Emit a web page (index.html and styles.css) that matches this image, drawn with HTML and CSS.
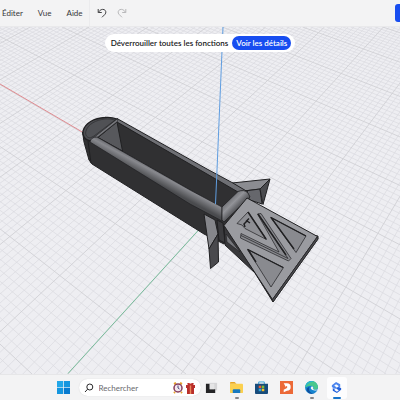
FILE: index.html
```html
<!DOCTYPE html>
<html lang="fr">
<head>
    <meta charset="UTF-8">
    <meta name="viewport" content="width=device-width, initial-scale=1.0">
    <title>Modeleur 3D</title>
    <link rel="stylesheet" href="styles.css">
</head>
<body>
    <header class="menubar">
        <nav class="menus">
            <button class="menu">Éditer</button>
            <button class="menu">Vue</button>
            <button class="menu">Aide</button>
        </nav>
        <div class="history">
            <button class="tool" aria-label="Annuler">
                <svg viewBox="0 0 10 10"><path d="M1.2 1v3.5h3.6M1.4 4.3C3 1.7 5.200.9 7.100 1.600c2 .8 2.300 3.300.9 4.700L5 9.300"/></svg>
            </button>
            <button class="tool" aria-label="Rétablir" disabled>
                <svg viewBox="0 0 10 10"><path d="M8.800 1v3.500H5.200M8.600 4.300C7 1.700 4.800.9 2.900 1.600c-2 .8-2.300 3.300-.9 4.700L5 9.300"/></svg>
            </button>
        </div>
        <button class="share" aria-label="Partager"></button>
    </header>

    <main class="viewport">
        <svg class="scene" viewBox="0 27 400 347" preserveAspectRatio="xMidYMid slice" role="img" aria-label="Modèle 3D">
            <defs>
                <linearGradient id="tube" gradientUnits="userSpaceOnUse" x1="154" y1="165" x2="147" y2="178">
                    <stop offset="0" stop-color="#55565a"/>
                    <stop offset=".4" stop-color="#88898e"/>
                    <stop offset="1" stop-color="#4a4b4e"/>
                </linearGradient>
                <linearGradient id="endTube" gradientUnits="userSpaceOnUse" x1="228" y1="198" x2="238" y2="208">
                    <stop offset="0" stop-color="#67686c"/>
                    <stop offset=".5" stop-color="#929398"/>
                    <stop offset="1" stop-color="#55565a"/>
                </linearGradient>
            </defs>
            <path id="minor" class="grid-minor"/>
            <path id="major" class="grid-major"/>
            <path class="axis-x" d="M0 84L84 133"/>
            <path class="axis-y" d="M68 373.500L204 224"/>

            <g class="model">
                <!-- upper fin -->
                <path fill="#8b8c91" d="M232 183L270 179L260 189L244 191Z"/>
                <path fill="#66676c" d="M244 191L260 189L262 204L250 200Z"/>
                <path fill="#4a4b4f" d="M270 179L263 204.500L260 189Z"/>
                <!-- body -->
                <path fill="#303032" d="M82.500 132L84 142L89 160L92 164L204 234L224 244L248 200L222 218L90 140Z"/>
                <path d="M88 141L91 163"/>
                <path fill="#4d4e52" stroke-width="1.300" d="M90 141C85 140 82 136 83 131C85 123 94 118 105 117.500Q112 117 117 119L97 137Z"/>
                <path fill="#505155" stroke-width=".5" d="M90 138C86 137 85 134 86 131C88 124 96 120 105 119Q111 118.500 115 120L94 136Z"/>
                <path fill="#6e6f74" d="M117 118.500L207 169L232 182.500L248 192L238 194L116 122Z"/>
                <path fill="#303032" d="M117 122L207 174L238 192L222 208L97 137Z"/>
                <path fill="#57585c" d="M117 122L122.500 151L98 137.500Z"/>
                <path fill="#77787d" stroke-width=".6" d="M117 119L118 121L98 137L92 139Z"/>
                <path fill="url(#tube)" stroke-width=".7" d="M90 142Q91 137 97 137L190 190L222 207L222 221L190 204Z"/>
                <path fill="url(#endTube)" stroke-width=".8" d="M238 191.500Q244 189 248 193L250 197L224 222L222 220L222 207Z"/>
                <path class="axis-z" d="M223 27L217 170L215.500 204"/>
                <!-- lower left fin -->
                <path fill="#85868b" d="M204 214L209 249L218 234L215 220Z"/>
                <path fill="#49494d" d="M209 249L218 234L218.500 262L210.500 268.500Z"/>
                <path fill="#3b3b3e" d="M217 220L223 223L225 243L219 240Z"/>
                <!-- end plate -->
                <path fill="#38383b" d="M224 225L225 245L255 273L273 302L318 239L318 236Z"/>
                <path fill="#75767b" stroke-width=".6" d="M226 234L227 242L240 252Z"/>
                <path fill="#9a9ba0" d="M247 198L317.500 236.500L272.500 299.500L224 225.500Z"/>
                <path fill="#4c4c50" stroke-width=".6" d="M317.500 236.500L318 239L273 302L272.500 299.500Z"/>
                <g stroke-width=".7">
                    <path fill="#8e8f94" d="M237 223.500L248 212L266.500 239.500L245 228.500L242 225Z"/>
                    <path stroke-width="1.500" fill="none" d="M248 212L266 239M245 227L244 224L247 221L250 223M246 221.500L249 218.500"/>
                    <path fill="#87888d" d="M257.500 214L261 213.500L291 258.500L288.500 261L240.500 238L241 233.500L279 252Z"/>
                    <path fill="none" d="M241 235.500L288 258.500L259 215"/>
                    <path stroke-width="1.500" d="M258 214L286 255"/>
                    <path fill="#898a8f" d="M271 217.500L306 236L296 252.500Z"/>
                    <path stroke-width="1.400" fill="none" d="M306 236L271 217.500L294 249"/>
                    <path fill="#898a8f" d="M247.500 249.500L283.500 267.500L271 287Z"/>
                    <path stroke-width="1.400" fill="none" d="M283 267.500L248 249.500L256 262"/>
                </g>
            </g>
        </svg>

        <div class="unlock">
            <span>Déverrouiller toutes les fonctions</span>
            <button class="details">Voir les détails</button>
        </div>
    </main>

    <footer class="taskbar">
        <button class="app" aria-label="Démarrer">
            <svg viewBox="0 0 14 14"><path fill="#22a7e8" d="M0 0h6.600v6.600H0z"/><path fill="#1596df" d="M7.400 0H14v6.600H7.400zM0 7.400h6.600V14H0z"/><path fill="#087bd0" d="M7.400 7.400H14V14H7.400z"/></svg>
        </button>
        <label class="search">
            <svg class="lens" viewBox="0 0 10 10"><circle cx="5.800" cy="4" r="3"/><path d="M3.600 6.200L1 9"/></svg>
            <input type="text" placeholder="Rechercher" aria-label="Rechercher">
            <svg class="promo" viewBox="0 0 24 12">
                <path stroke="#e5a22c" stroke-width="2" d="M2 2l2-1M10 2L8 1M3 10l-1 1M9 10l1 1"/>
                <circle cx="6" cy="6" r="4" fill="#f3e8ef" stroke="#873d5c" stroke-width="1.500"/>
                <path stroke="#47437c" fill="none" d="M6 3.500V6l1.500 1"/>
                <path fill="#b92f2a" d="M14 3h9v3h-9zM15 6h7v6h-7z"/>
                <path fill="#e98b5d" d="M17.800 3h1.400v9h-1.400z"/>
                <path stroke="#bd302b" stroke-width="1.200" fill="none" d="M18.500 3C15 3 15 0 18.500 2.500C22 0 22 3 18.500 3"/>
            </svg>
        </label>
        <button class="app" aria-label="Vue des tâches">
            <svg viewBox="0 0 14 14"><path fill="#d5d5d7" d="M5 2h8v8H5z"/><path fill="#242426" d="M1 3h4v6h6v4H1z"/><path fill="#f5f5f6" d="M5 3h5v6H5z" opacity=".5"/></svg>
        </button>
        <button class="app open" aria-label="Explorateur de fichiers">
            <svg viewBox="0 0 14 14"><path fill="#e6a622" d="M0 2q0-1 1-1h4l2 2H0z"/><path fill="#fbd04f" d="M0 3h13q1 0 1 1v8q0 1-1 1H1q-1 0-1-1z"/><path fill="#1879bf" d="M3 13v-3q0-1 1-1h6q1 0 1 1v3z"/></svg>
        </button>
        <button class="app" aria-label="Microsoft Store">
            <svg viewBox="0 0 14 14"><path fill="none" stroke="#35a3dc" d="M4 4V1h6v3"/><path fill="#174c7c" d="M0 3h14v10q0 1-1 1H1q-1 0-1-1z"/><path fill="#f05b32" d="M4 5h2.700v2.700H4z"/><path fill="#80bb35" d="M7.300 5H10v2.700H7.300z"/><path fill="#2ca8e0" d="M4 8.300h2.700V11H4z"/><path fill="#fbbd21" d="M7.300 8.300H10V11H7.300z"/></svg>
        </button>
        <button class="app" aria-label="Éditeur PDF">
            <svg viewBox="0 0 14 14"><path fill="#ec6937" d="M0 0h14v14H0z"/><path fill="#fff" d="M4 2.500h3.500a4 4 0 0 1 0 8L4 12V9.500l3-1.700c1.500-1 1-2.300-.5-2.300V7z"/></svg>
        </button>
        <button class="app open" aria-label="Microsoft Edge">
            <svg viewBox="0 0 14 14"><circle cx="7" cy="7" r="7" fill="#1684cf"/><path fill="#48c78d" d="M1 4C3-1 12-2 14 6c.3 3-3 4-5 3 1-2 0-4-2.500-4C4 5 2 6 0 7z"/><path fill="#26b6d6" d="M1 4C3 0 7-1 10 1 5 0 2 4 0 7z"/><path fill="#104f9d" d="M5 6c-2 4 1 8 5 7-5 2-9-1-8-5z"/><path fill="#f1f4f5" d="M7 6c-2 2 0 5 6 4 1 0 1-1 .3-.8C10 10 8 9 9 7.500 9 6 8 5.500 7 6z"/></svg>
        </button>
        <button class="app open active" aria-label="Modeleur 3D">
            <svg viewBox="0 0 14 14"><path fill="#4b85ee" d="M2 4.500L6.500 1l4.500 2.500v3L9 8V5L6.500 3.500 4.500 5l3 2-2 1.500L2 6.500z"/><path fill="#1f5edb" d="M12 9.500L7.500 13 3 10.500v-3L5 9v1l2.500 1.500 2-1.500-3-2 2-1.500L12 7.500z"/></svg>
        </button>
    </footer>

    <script>
        // Ground grid: lines run from each vanishing point to the bottom edge.
        const horizonY = -350;
        const sceneTop = 27;
        const sceneBottom = 374;

        function gridLines(vanishX, start, step, from, to, keep) {
            const t = (sceneTop - horizonY) / (sceneBottom - horizonY);
            let d = '';
            for (let i = from; i <= to; i++) {
                if (!keep(i)) continue;
                const x = start + i * step;
                const topX = vanishX + (x - vanishX) * t;
                d += `M${topX.toFixed(1)} ${sceneTop}L${x.toFixed(1)} ${sceneBottom}`;
            }
            return d;
        }

        function drawGrid(id, keep) {
            const d = gridLines(-742, 494, 15.4, -34, 64, keep)
                + gridLines(726, 68, 11.3, -70, 32, keep);
            document.getElementById(id).setAttribute('d', d);
        }

        drawGrid('minor', i => i % 10 !== 0);
        drawGrid('major', i => i % 10 === 0);
    </script>
</body>
</html>
```

FILE: styles.css
```css
* {
    box-sizing: border-box;
}
body {
    margin: 0;
    height: 100vh;
    display: flex;
    flex-direction: column;
    overflow: hidden;
    background-color: #f3f3f4;
    font-family: Lato, "Noto Sans", sans-serif;
    font-size: 8px;
    color: #38383a;
}
button,
input {
    margin: 0;
    padding: 0;
    border: none;
    background: none;
    font: inherit;
    color: inherit;
}
button {
    cursor: pointer;
}
.menubar {
    flex: none;
    display: flex;
    align-items: center;
    height: 27px;
    border-bottom: 1px solid #e9e9eb;
}
.menus {
    display: flex;
    gap: 15px;
    padding: 0 6px 0 2px;
}
.history {
    display: flex;
    align-items: center;
    gap: 10px;
    height: 100%;
    padding-left: 7px;
    border-left: 1px solid #ebebed;
}
.tool {
    width: 10px;
    height: 10px;
}
.tool svg {
    display: block;
    fill: none;
    stroke: #444446;
    stroke-width: 1;
}
.tool:disabled svg {
    stroke: #b8b8ba;
}
.share {
    width: 5px;
    height: 18px;
    margin-left: auto;
    border-radius: 3px 0 0 3px;
    background-color: #174df0;
}
.viewport {
    position: relative;
    flex: 1;
    min-height: 0;
    display: flex;
    flex-direction: column;
    align-items: center;
    padding-top: 7px;
    background-color: #eeeef2;
}
.scene {
    position: absolute;
    inset: 0;
    width: 100%;
    height: 100%;
    fill: none;
}
.grid-minor {
    stroke: #dadadf;
    stroke-width: .7;
}
.grid-major {
    stroke: #d0d0d5;
    stroke-width: .9;
}
.axis-x {
    stroke: #e08b90;
}
.axis-y {
    stroke: #79bd9c;
}
.model {
    stroke: #202022;
    stroke-linejoin: round;
}
.model .axis-z {
    stroke: #5f9de0;
    fill: none;
}
.unlock {
    position: relative;
    display: flex;
    align-items: center;
    gap: 4px;
    height: 18px;
    padding: 0 4px 0 6px;
    border-radius: 9px;
    background-color: #fff;
    font-weight: 600;
    color: #19191b;
}
.details {
    height: 14px;
    padding: 0 4px;
    border-radius: 7px;
    background-color: #174df0;
    color: #fff;
}
.taskbar {
    flex: none;
    display: flex;
    justify-content: center;
    align-items: center;
    gap: 5px;
    height: 26px;
    border-top: 1px solid #e6e6e8;
}
.app {
    position: relative;
    display: flex;
    justify-content: center;
    align-items: center;
    width: 20px;
    height: 22px;
    border-radius: 3px;
}
.app svg {
    width: 13px;
    height: 13px;
}
.open::after {
    content: "";
    position: absolute;
    bottom: 0;
    width: 4px;
    height: 2px;
    border-radius: 1px;
    background-color: #858588;
}
.active {
    background-color: #fdfdfe;
}
.active::after {
    width: 8px;
    background-color: #1673ca;
}
.search {
    display: flex;
    align-items: center;
    width: 122px;
    height: 17px;
    margin-right: -4px;
    padding: 0 5px;
    border-radius: 9px;
    background-color: #fff;
    box-shadow: 0 0 1px #c8c8ca;
}
.lens {
    flex: none;
    width: 10px;
    height: 10px;
    margin-right: 5px;
    fill: none;
    stroke: #29292b;
}
.search input {
    flex: 1;
    min-width: 0;
    outline: none;
}
.search input::placeholder {
    color: #69696c;
    opacity: 1;
}
.promo {
    flex: none;
    width: 24px;
    height: 12px;
}
```
